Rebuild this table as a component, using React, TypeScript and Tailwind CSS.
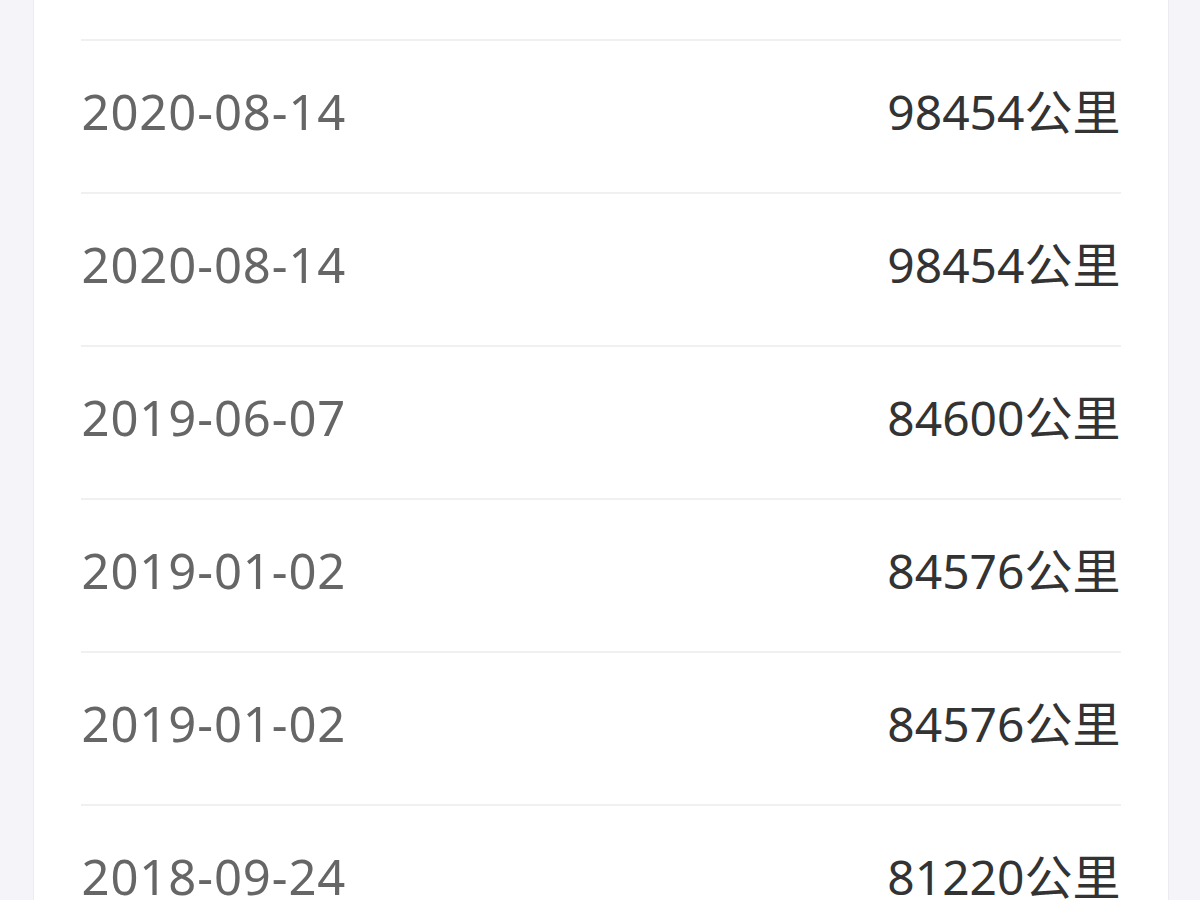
import React from "react";

const rows = [
  { date: "2020-08-14", km: "98454公里" },
  { date: "2020-08-14", km: "98454公里" },
  { date: "2019-06-07", km: "84600公里" },
  { date: "2019-01-02", km: "84576公里" },
  { date: "2019-01-02", km: "84576公里" },
  { date: "2018-09-24", km: "81220公里" },
];

export default function App() {
  return (
    <div
      className="w-[1200px] h-[900px] overflow-hidden bg-[#f5f5f9] flex justify-center"
      style={{ fontFamily: '"Noto Sans", "Noto Sans CJK SC", sans-serif' }}
    >
      <div className="w-[1136px] ml-[1px] h-full bg-white border-x border-[#ececf0] px-[47px]">
        <div className="h-[39px]" />
        {rows.map((r, i) => (
          <div
            key={i}
            className="h-[153px] border-t-2 border-[#f0f0f2] flex items-center justify-between pb-[10px]"
          >
            <span className="text-[49px] leading-none text-[#666666] tracking-[0.9px] pl-[1px]">
              {r.date}
            </span>
            <span className="text-[48px] leading-none text-[#333333]">{r.km}</span>
          </div>
        ))}
      </div>
    </div>
  );
}
